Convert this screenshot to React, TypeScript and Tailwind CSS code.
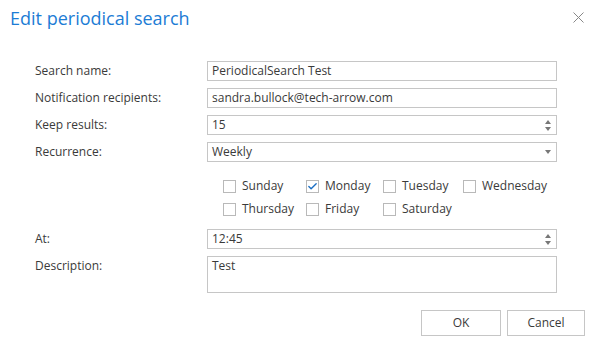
import { Check } from "lucide-react";

const days = [
  ["Sunday", false],
  ["Monday", true],
  ["Tuesday", false],
  ["Wednesday", false],
  ["Thursday", false],
  ["Friday", false],
  ["Saturday", false],
] as const;

function Spinner() {
  return (
    <div className="flex flex-col items-center gap-[3px] pr-[5px]">
      <span className="w-0 h-0 border-x-[3px] border-x-transparent border-b-[4px] border-b-[#777]" />
      <span className="w-0 h-0 border-x-[3px] border-x-transparent border-t-[4px] border-t-[#777]" />
    </div>
  );
}

function Row({ label, children }: { label: string; children: React.ReactNode }) {
  return (
    <div className="flex items-start">
      <div className="w-[172px] leading-[20px]">{label}</div>
      {children}
    </div>
  );
}

function Field({ value, right }: { value: string; right?: React.ReactNode }) {
  return (
    <div className="w-[350px] h-[20px] border border-[#c6c6c6] flex items-center justify-between pl-[4px]">
      <span>{value}</span>
      {right}
    </div>
  );
}

export default function App() {
  return (
    <div
      className="w-[594px] h-[345px] bg-white text-[12px] text-[#3a3a3a]"
      style={{ fontFamily: '"Open Sans", "Noto Sans", sans-serif' }}
    >
      <div className="flex items-start justify-between px-[10px] pt-[5px]">
        <h1 className="text-[18px] leading-[26px] text-[#1c7cd5]">Edit periodical search</h1>
        <svg width="11" height="11" viewBox="0 0 11 11" className="mt-[7px]">
          <path d="M0.5 0.5 L10.5 10.5 M10.5 0.5 L0.5 10.5" stroke="#888" strokeWidth="1" />
        </svg>
      </div>

      <div className="pl-[35px] pt-[30px] flex flex-col gap-[7px]">
        <Row label="Search name:">
          <Field value="PeriodicalSearch Test" />
        </Row>
        <Row label="Notification recipients:">
          <Field value="sandra.bullock@tech-arrow.com" />
        </Row>
        <Row label="Keep results:">
          <Field value="15" right={<Spinner />} />
        </Row>
        <Row label="Recurrence:">
          <Field
            value="Weekly"
            right={<span className="w-0 h-0 mr-[5px] border-x-[3px] border-x-transparent border-t-[4px] border-t-[#777]" />}
          />
        </Row>

        <div className="pl-[188px] pt-[10px] pb-[6px] grid grid-cols-[83px_77px_80px_auto] gap-y-[9px]">
          {days.map(([d, on]) => (
            <label key={d} className="flex items-center gap-[6px] leading-[14px]">
              <span className="w-[13px] h-[13px] border border-[#b9b9b9] flex items-center justify-center">
                {on && <Check size={11} strokeWidth={3} color="#1c6fc4" />}
              </span>
              <span>{d}</span>
            </label>
          ))}
        </div>

        <Row label="At:">
          <Field value="12:45" right={<Spinner />} />
        </Row>
        <Row label="Description:">
          <div className="w-[350px] h-[37px] border border-[#c6c6c6] pl-[4px] pt-[1px] leading-[16px]">Test</div>
        </Row>
      </div>

      <div className="flex justify-end gap-[6px] pr-[9px] pt-[17px]">
        <button className="w-[80px] h-[26px] border border-[#c6c6c6] bg-white text-[#3a3a3a]">OK</button>
        <button className="w-[78px] h-[26px] border border-[#c6c6c6] bg-white text-[#3a3a3a]">Cancel</button>
      </div>
    </div>
  );
}
